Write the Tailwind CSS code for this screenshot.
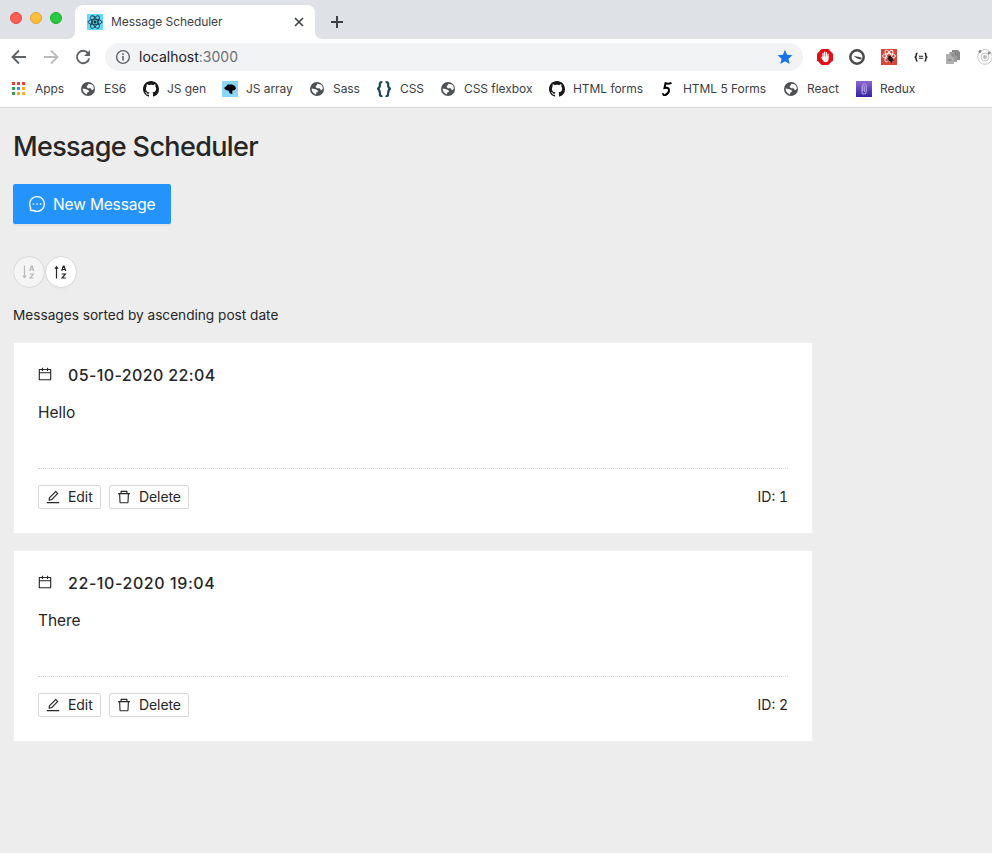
<!DOCTYPE html>
<html lang="en">
<head>
<meta charset="utf-8">
<title>Message Scheduler</title>
<script src="https://cdn.jsdelivr.net/npm/@tailwindcss/browser@4"></script>
</head>
<body class="h-[853px] w-[992px] overflow-hidden bg-[#ededed] font-['Inter','Liberation_Sans',sans-serif] text-[#262626]">
<svg class="hidden">
  <symbol id="globe" viewBox="0 0 16 16"><circle cx="8" cy="8" r="7" fill="#4d5156"/><path d="M8.2 2.8 12 3.4C13.2 4.6 14 6 13.800 8L12 9.200 10.600 7.200 8 7.200 6.600 6 7 4.600 8.200 4.200ZM2.600 7.600 6.600 8.200 8.800 9.400 8.800 11 7.200 11.400 7 13.400C4.400 12.800 2.600 10.600 2.600 7.600Z" fill="#fff"/></symbol>
  <symbol id="github" viewBox="0 0 16 16"><path fill="#191717" d="M8 0C3.58 0 0 3.58 0 8c0 3.54 2.29 6.53 5.47 7.59.4.07.55-.17.55-.38 0-.19-.01-.82-.01-1.49-2.01.37-2.53-.49-2.69-.94-.09-.23-.48-.94-.82-1.13-.28-.15-.68-.52-.01-.53.63-.01 1.08.58 1.23.82.72 1.21 1.87.87 2.33.66.07-.52.28-.87.51-1.07-1.78-.2-3.64-.89-3.64-3.95 0-.87.31-1.59.82-2.15-.08-.2-.36-1.02.08-2.12 0 0 .67-.21 2.2.82.64-.18 1.32-.27 2-.27s1.36.09 2 .27c1.53-1.04 2.2-.82 2.2-.82.44 1.1.16 1.92.08 2.12.51.56.82 1.27.82 2.15 0 3.07-1.87 3.75-3.65 3.95.29.25.54.73.54 1.48 0 1.07-.01 1.93-.01 2.2 0 .21.15.46.55.38A8.01 8.01 0 0 0 16 8c0-4.42-3.58-8-8-8z"/></symbol>
  <symbol id="calendar" viewBox="0 0 1024 1024"><path d="M880 184H712v-64c0-4.400-3.600-8-8-8h-56c-4.400 0-8 3.600-8 8v64H384v-64c0-4.400-3.600-8-8-8h-56c-4.400 0-8 3.600-8 8v64H144c-17.700 0-32 14.300-32 32v664c0 17.700 14.300 32 32 32h736c17.700 0 32-14.300 32-32V216c0-17.700-14.300-32-32-32zm-40 656H184V460h656v380zM184 392V256h128v48c0 4.400 3.600 8 8 8h56c4.400 0 8-3.600 8-8v-48h256v48c0 4.400 3.600 8 8 8h56c4.400 0 8-3.600 8-8v-48h128v136H184z"/></symbol>
  <symbol id="edit" viewBox="0 0 1024 1024"><path d="M257.7 752c2 0 4-.2 6-.5L431.9 722c2-.4 3.900-1.300 5.300-2.800l423.900-423.900a9.960 9.960 0 000-14.100L694.900 114.900c-1.900-1.900-4.400-2.900-7.100-2.900s-5.200 1-7.100 2.900L256.800 538.800c-1.500 1.500-2.400 3.300-2.800 5.300l-29.500 168.200a33.500 33.500 0 009.400 29.800c6.600 6.400 14.900 9.900 23.800 9.900zm67.400-174.400L687.800 215l73.300 73.300-362.700 362.600-88.900 15.700 15.600-89zM880 836H144c-17.700 0-32 14.300-32 32v36c0 4.400 3.600 8 8 8h784c4.400 0 8-3.600 8-8v-36c0-17.700-14.300-32-32-32z"/></symbol>
  <symbol id="delete" viewBox="0 0 1024 1024"><path d="M360 184h-8c4.400 0 8-3.600 8-8v8h304v-8c0 4.400 3.600 8 8 8h-8v72h72v-80c0-35.300-28.700-64-64-64H352c-35.300 0-64 28.700-64 64v80h72v-72zm504 72H160c-17.700 0-32 14.300-32 32v32c0 4.400 3.600 8 8 8h60.400l24.700 523c1.600 34.100 29.800 61 63.900 61h454c34.200 0 62.300-26.800 63.900-61l24.700-523H888c4.400 0 8-3.600 8-8v-32c0-17.700-14.300-32-32-32zM731.300 840H292.700l-24.200-512h487l-24.200 512z"/></symbol>
  <symbol id="az" viewBox="0 0 6 14"><path d="M.7 6 2.300 1.200H3.100L4.700 6M1.200 4.500H4.200M.7 9H4.400L1 13H4.700" fill="none" stroke="currentColor" stroke-width="1.200"/></symbol>
</svg>

<header class="h-[108px] border-b border-[#d5d7da] bg-white">
  <div class="flex h-[39px] bg-[#dee1e6]">
    <div class="flex w-[75px] gap-2 rounded-br-lg pl-[10px] pt-3">
      <i class="size-3 rounded-full border border-[#e2463f] bg-[#ff5f57]"></i>
      <i class="size-3 rounded-full border border-[#e1a32f] bg-[#ffbd3e]"></i>
      <i class="size-3 rounded-full border border-[#1eac2e] bg-[#28ca42]"></i>
    </div>
    <div class="relative mt-[5px] flex h-[34px] w-[240px] items-center rounded-t-lg bg-white pl-3">
      <svg class="absolute -left-2 bottom-0 size-2" viewBox="0 0 8 8"><path d="M8 0V8H0Q8 8 8 0Z" fill="#fff"/></svg>
      <svg class="absolute -right-2 bottom-0 size-2" viewBox="0 0 8 8"><path d="M0 0V8H8Q0 8 0 0Z" fill="#fff"/></svg>
      <svg class="size-4" viewBox="0 0 16 16"><path fill="#61dafb" d="M0 0H16V16H0Z"/><g fill="none" stroke="#173640" stroke-width=".9"><ellipse cx="8" cy="8" rx="7" ry="2.700"/><ellipse cx="8" cy="8" rx="7" ry="2.700" transform="rotate(60 8 8)"/><ellipse cx="8" cy="8" rx="7" ry="2.700" transform="rotate(120 8 8)"/></g><circle cx="8" cy="8" r="1.500" fill="#173640"/></svg>
      <span class="ml-2 w-[180px] whitespace-nowrap text-xs tracking-[-0.06px] text-[#3c4043]">Message Scheduler</span>
      <svg class="size-4" viewBox="0 0 16 16"><path d="M4 4l8 8M12 4l-8 8" stroke="#3c4043" stroke-width="1.600"/></svg>
    </div>
    <svg class="ml-[14px] mt-[14px] size-4" viewBox="0 0 16 16"><path d="M8 2V14M2 8H14" stroke="#3c4043" stroke-width="2"/></svg>
  </div>

  <div class="flex h-9 items-center overflow-hidden pl-[11px]">
    <svg class="size-4 shrink-0" viewBox="0 0 16 16" fill="none" stroke="#5f6368" stroke-width="1.900"><path d="M15 8H2M8 1.500 1.500 8 8 14.500"/></svg>
    <svg class="ml-4 size-4 shrink-0" viewBox="0 0 16 16" fill="none" stroke="#babcbe" stroke-width="1.900"><path d="M1 8H14M8 1.500 14.500 8 8 14.500"/></svg>
    <svg class="ml-4 size-4 shrink-0" viewBox="0 0 16 16"><path d="M13.300 4.500A6.200 6.200 0 1 0 14.200 9.500" fill="none" stroke="#5f6368" stroke-width="1.900"/><path d="M15 1V7H9Z" fill="#5f6368"/></svg>
    <div class="ml-[14px] flex h-7 w-[698px] shrink-0 items-center rounded-full bg-[#f1f3f4] pl-[10px]">
      <svg class="size-4" viewBox="0 0 16 16" fill="none" stroke="#5f6368"><circle cx="8" cy="8" r="6.400" stroke-width="1.400"/><path d="M8 7V11.500M8 4.300V5.900" stroke-width="1.600"/></svg>
      <span class="ml-2 w-[638px] whitespace-nowrap text-sm text-[#202124]">localhost<span class="text-[#6b6f74]">:3000</span></span>
      <svg class="size-4" viewBox="0 0 16 16"><path fill="#1a73e8" d="M8 .8l2.100 5 5.400.5-4.100 3.500 1.300 5.300L8 12.300l-4.700 2.800 1.300-5.300L.5 6.300l5.400-.5z"/></svg>
    </div>
    <div class="ml-[14px] flex shrink-0 gap-4">
      <svg class="size-4" viewBox="0 0 16 16"><path fill="#e40d18" d="M4.700 0h6.600L16 4.700v6.600L11.300 16H4.700L0 11.300V4.700z"/><path d="M6 8V4.300M7.700 7.500V3M9.400 7.500V3.500M11 8V5.200M4.600 8.300 6.500 11" stroke="#fff" stroke-width="1.200" stroke-linecap="round"/><path fill="#fff" d="M5.500 7.500H11.600V10Q11.200 13.300 8.700 13.300T5.500 10Z"/></svg>
      <svg class="size-4" viewBox="0 0 16 16"><circle cx="8" cy="8" r="6.700" fill="#fff" stroke="#4a4a4a" stroke-width="2.500"/><path d="M4.500 6.800 12.500 8.400V10.400L8 9.400Z" fill="#4a4a4a"/></svg>
      <svg class="size-4" viewBox="0 0 16 16"><path fill="#d8453b" d="M0 0H16V16H0Z"/><g fill="none" stroke="#fff" stroke-width=".9"><ellipse cx="8" cy="7" rx="6.500" ry="2.400"/><ellipse cx="8" cy="7" rx="6.500" ry="2.400" transform="rotate(60 8 7)"/><ellipse cx="8" cy="7" rx="6.500" ry="2.400" transform="rotate(120 8 7)"/></g><ellipse cx="9.500" cy="10" rx="2.300" ry="3.300" fill="#321817" transform="rotate(-35 9.500 10)"/><path d="M6 9.500 13 11.500M7 12.500 11.500 7.500M9 7 10.500 14" stroke="#321817" stroke-width=".9"/></svg>
      <svg class="size-4" viewBox="0 0 16 16" fill="none" stroke="#222" stroke-width="1.500"><path d="M4.500 4.300Q3 4.300 3.200 6T1.800 8.200Q3.200 8.400 3.200 10.200T4.500 12M11.500 4.300Q13 4.300 12.800 6T14.200 8.200Q12.800 8.400 12.800 10.200T11.500 12"/><path d="M5.800 7.200H10.200M5.800 9.300H10.200" stroke-width="1.100"/></svg>
      <svg class="size-4" viewBox="0 0 16 16"><path fill="#8b8b8b" d="M7 1H13L15 3V11H7Z"/><path fill="#9b9b9b" d="M4.500 3H11L12 5V13H4.500Z"/><path fill="#b0b0b0" d="M1 5H7L9 7V15H1Z"/><path d="M3 11H6.500M7 5V7H9M10.500 3V6H13" stroke="#777" fill="none"/></svg>
      <svg class="size-4" viewBox="0 0 16 16" fill="none" stroke="#c4c4c4"><circle cx="8" cy="8" r="7.300"/><circle cx="8" cy="8" r="4"/><circle cx="8" cy="8" r="1.700" fill="#bbb"/><circle cx="3" cy="2.500" r="1" fill="#888" stroke="#888"/><circle cx="12" cy="4" r="1" fill="#888" stroke="#888"/></svg>
    </div>
  </div>

  <nav class="flex h-7 items-center whitespace-nowrap pl-[11px] text-xs tracking-[-0.05px] text-[#3c4043]">
    <span class="flex w-[69px] items-center gap-2"><svg class="size-4" viewBox="0 0 16 16"><path fill="#ea4335" d="M1 1H4V4H1ZM6 1H9V4H6ZM11 1H14V4H11Z"/><path fill="#34a05a" d="M1 6H4V9H1ZM1 11H4V14H1Z"/><path fill="#4285f4" d="M6 6H9V9H6Z"/><path fill="#f9ab21" d="M11 6H14V9H11ZM6 11H9V14H6ZM11 11H14V14H11Z"/></svg><span>Apps</span></span>
    <span class="flex w-[63px] items-center gap-2"><svg class="size-4"><use href="#globe"/></svg><span>ES6</span></span>
    <span class="flex w-[79px] items-center gap-2"><svg class="size-4"><use href="#github"/></svg><span>JS gen</span></span>
    <span class="flex w-[87px] items-center gap-2"><svg class="size-4" viewBox="0 0 16 16"><path fill="#8ad4f5" d="M0 0H16V16H0Z"/><path d="M2 7 4.500 5 5.500 3.500 10 3.500 13 5 14 7.500 12.500 9.300 10.300 9.500 10.300 13 8 12.500 6.500 9.800 3.500 8.800Z"/></svg><span>JS array</span></span>
    <span class="flex w-[67px] items-center gap-2"><svg class="size-4"><use href="#globe"/></svg><span>Sass</span></span>
    <span class="flex w-[64px] items-center gap-2"><svg class="size-4" viewBox="0 0 16 16" fill="none" stroke="#174459" stroke-width="2.200"><path d="M6.300 1.200Q3.500 1 3.800 4T1.300 8Q3.800 8 3.800 12T6.300 14.800M9.700 1.200Q12.500 1 12.200 4T14.700 8Q12.200 8 12.200 12T9.700 14.800"/></svg><span>CSS</span></span>
    <span class="flex w-[109px] items-center gap-2"><svg class="size-4"><use href="#globe"/></svg><span>CSS flexbox</span></span>
    <span class="flex w-[110px] items-center gap-2"><svg class="size-4"><use href="#github"/></svg><span>HTML forms</span></span>
    <span class="flex w-[124px] items-center gap-2"><svg class="size-4" viewBox="0 0 16 16" fill="none" stroke="#000" stroke-width="2"><path d="M12.500 1.800Q9 3.300 6.500 2.300L5.500 7Q9.800 6 10 9T6.500 14Q4 14.600 4 12.300"/></svg><span>HTML 5 Forms</span></span>
    <span class="flex w-[73px] items-center gap-2"><svg class="size-4"><use href="#globe"/></svg><span>React</span></span>
    <span class="flex items-center gap-2"><svg class="size-4" viewBox="0 0 16 16"><defs><linearGradient id="violet" x2="0" y2="1"><stop stop-color="#9165d0"/><stop offset="1" stop-color="#3422a3"/></linearGradient></defs><path fill="url(#violet)" d="M0 0H16V16H0Z"/><path d="M6 5V11Q6 13 8 13T10.300 11V5Q10.300 3 8.500 3T6.800 5V10M8.500 5V11" fill="none" stroke="#a797dc" stroke-width="1.200"/></svg><span>Redux</span></span>
  </nav>
</header>

<main class="w-[813px] pl-[13px] pt-[21px]">
  <h1 class="h-9 whitespace-nowrap text-[27px] leading-9 font-medium tracking-[-0.64px]">Message Scheduler</h1>
  <button class="mt-[19px] flex h-10 w-[158px] items-center gap-2 rounded-[2px] bg-[#2593fc] pl-4 text-[15.5px] tracking-[-0.15px] whitespace-nowrap text-white shadow-[0_2px_0_rgba(0,0,0,0.045)]">
    <svg class="size-4 shrink-0 fill-current" viewBox="64 64 896 896"><path d="M464 512a48 48 0 1096 0 48 48 0 10-96 0zm200 0a48 48 0 1096 0 48 48 0 10-96 0zm-400 0a48 48 0 1096 0 48 48 0 10-96 0zm661.200-173.600c-22.600-53.700-55-101.900-96.300-143.300a444.350 444.350 0 00-143.300-96.300C630.600 75.700 572.200 64 512 64h-2c-60.600.3-119.300 12.300-174.500 35.900a445.350 445.350 0 00-142 96.500c-40.900 41.300-73 89.300-95.200 142.800-23 55.400-34.600 114.300-34.300 174.900A449.400 449.400 0 00112 714v152a46 46 0 0046 46h152.100A449.400 449.400 0 00510 960h2.100c59.900 0 118-11.600 172.700-34.300a444.480 444.480 0 00142.800-95.200c41.300-40.900 73.800-88.700 96.500-142 23.600-55.200 35.600-113.900 35.900-174.500.3-60.900-11.500-120-34.800-175.600zm-151.100 438C704 845.800 611 884 512 884h-1.700c-60.300-.3-120.200-15.300-173.100-43.500l-8.400-4.500H188V695.200l-4.500-8.400C155.300 633.900 140.300 574 140 513.700c-.4-99.700 37.700-193.300 107.600-263.800 69.800-70.500 163.100-109.500 262.800-109.900h1.700c50 0 98.500 9.700 144.200 28.900 44.600 18.700 84.600 45.600 119 80 34.300 34.300 61.300 74.400 80 119 19.400 46.200 29.100 95.200 28.900 145.800-.6 99.600-39.700 192.900-110.100 262.700z"/></svg>
    <span class="pt-[2px]">New Message</span>
  </button>
  <div class="mt-8 flex">
    <button class="flex size-8 items-center justify-center gap-[1px] rounded-full border border-[#d9d9d9] bg-[#f5f5f5] pr-[1px] text-[#b9b9b9]"><svg class="h-[14px] w-[6px]" viewBox="0 0 6 14"><path d="M2.500 .5V13" stroke="currentColor" stroke-width="1.200"/><path d="M.3 10.500H4.700L2.500 13.500Z" fill="currentColor"/></svg><svg class="h-[14px] w-[6px]"><use href="#az"/></svg></button>
    <button class="flex size-8 items-center justify-center gap-[1px] rounded-full border border-[#d9d9d9] bg-white pr-[1px] text-[#262626] shadow-[0_2px_0_rgba(0,0,0,0.016)]"><svg class="h-[14px] w-[6px]" viewBox="0 0 6 14"><path d="M2.500 13.500V2" stroke="currentColor" stroke-width="1.200"/><path d="M.3 3.800H4.700L2.500 .7Z" fill="currentColor"/></svg><svg class="h-[14px] w-[6px]"><use href="#az"/></svg></button>
  </div>
  <p class="mt-4 h-[22px] whitespace-nowrap text-[13.650px] leading-[22px]">Messages sorted by ascending post date</p>

  <article class="mt-4 h-[192px] w-[800px] border border-[#f0f0f0] bg-white px-6 pt-[18px]">
    <h2 class="flex h-7 items-center whitespace-nowrap text-base font-medium tracking-[0.38px]"><svg class="mr-4 mb-0.5 size-[14px] fill-current" viewBox="64 64 896 896"><use href="#calendar" width="1024" height="1024"/></svg><span>05-10-2020 22:04</span></h2>
    <p class="mt-[11px] h-6 text-[15.5px] leading-[26px]">Hello</p>
    <div class="mt-[44px] flex border-t border-dotted border-[#d4d4d4] pt-4 text-sm tracking-[-0.08px]">
      <button class="flex h-6 w-[63px] items-center gap-2 rounded-[2px] border border-[#d9d9d9] pl-[7px]"><svg class="size-[14px] shrink-0 fill-current" viewBox="64 64 896 896"><use href="#edit" width="1024" height="1024"/></svg><span>Edit</span></button>
      <button class="ml-2 flex h-6 w-20 items-center gap-2 rounded-[2px] border border-[#d9d9d9] pl-[7px]"><svg class="size-[14px] shrink-0 fill-current" viewBox="64 64 896 896"><use href="#delete" width="1024" height="1024"/></svg><span>Delete</span></button>
      <span class="ml-auto leading-6 tracking-normal tabular-nums">ID: 1</span>
    </div>
  </article>
  <article class="mt-4 h-[192px] w-[800px] border border-[#f0f0f0] bg-white px-6 pt-[18px]">
    <h2 class="flex h-7 items-center whitespace-nowrap text-base font-medium tracking-[0.58px]"><svg class="mr-4 mb-0.5 size-[14px] fill-current" viewBox="64 64 896 896"><use href="#calendar" width="1024" height="1024"/></svg><span>22-10-2020 19:04</span></h2>
    <p class="mt-[11px] h-6 text-[15.5px] leading-[26px] tracking-[-0.1px]">There</p>
    <div class="mt-[44px] flex border-t border-dotted border-[#d4d4d4] pt-4 text-sm tracking-[-0.08px]">
      <button class="flex h-6 w-[63px] items-center gap-2 rounded-[2px] border border-[#d9d9d9] pl-[7px]"><svg class="size-[14px] shrink-0 fill-current" viewBox="64 64 896 896"><use href="#edit" width="1024" height="1024"/></svg><span>Edit</span></button>
      <button class="ml-2 flex h-6 w-20 items-center gap-2 rounded-[2px] border border-[#d9d9d9] pl-[7px]"><svg class="size-[14px] shrink-0 fill-current" viewBox="64 64 896 896"><use href="#delete" width="1024" height="1024"/></svg><span>Delete</span></button>
      <span class="ml-auto leading-6 tracking-normal tabular-nums">ID: 2</span>
    </div>
  </article>
</main>
</body>
</html>
